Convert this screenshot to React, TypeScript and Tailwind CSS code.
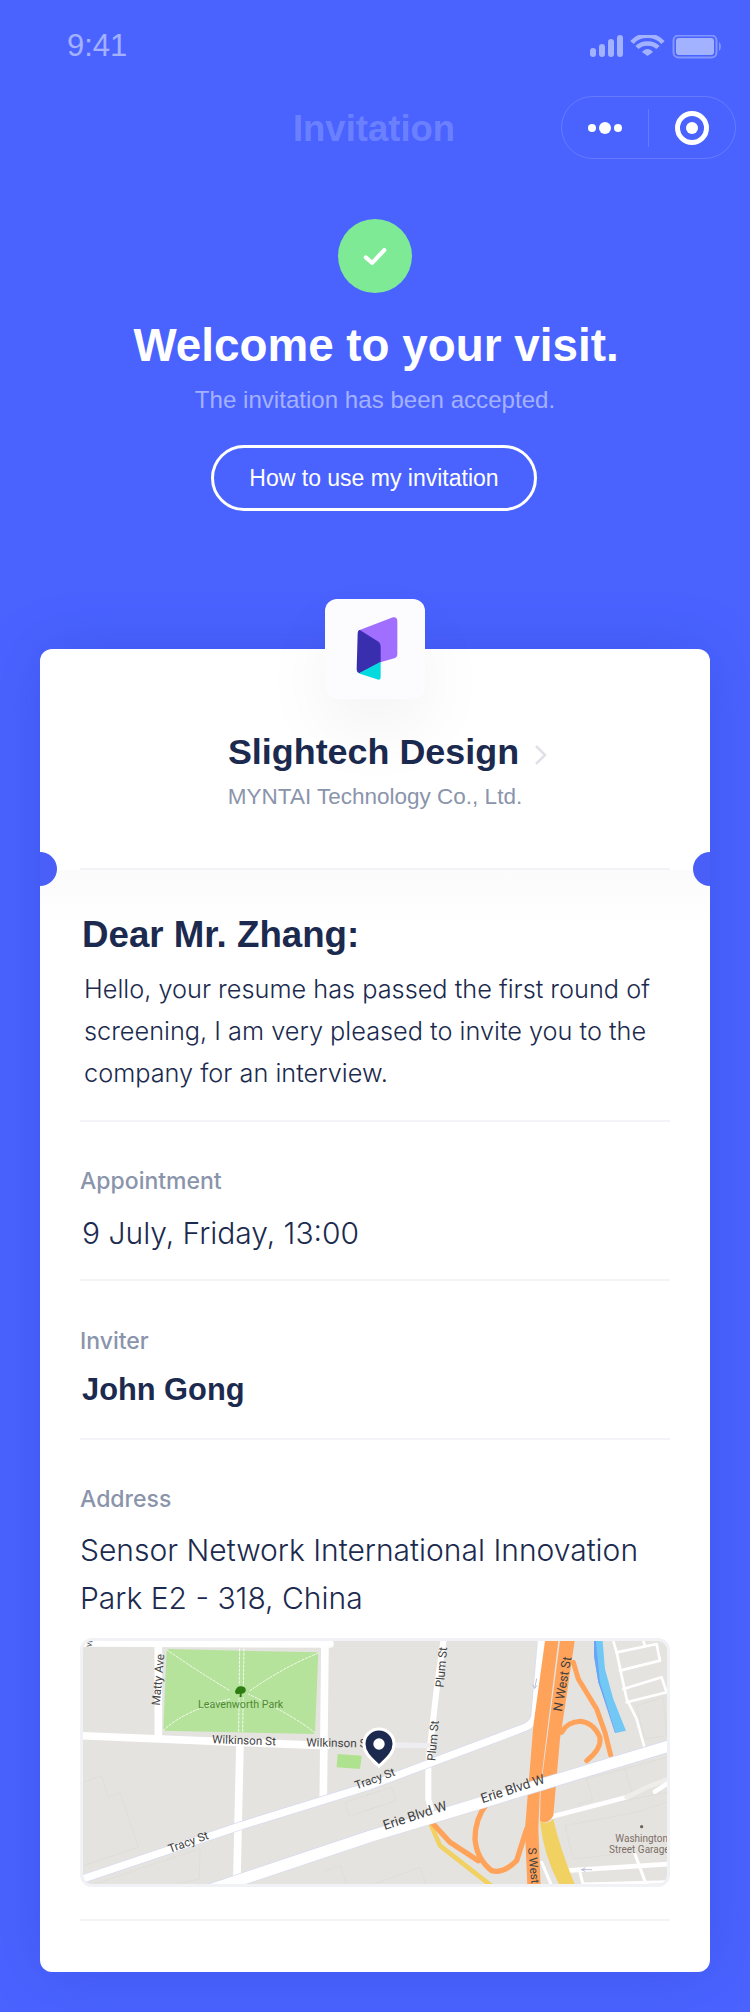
const rows = [
  { label: 'Appointment', value: '9 July, Friday, 13:00' },
]

function StatusIcons() {
  return (
    <svg className="mt-[2px]" width="132" height="24" viewBox="590 35 132 24" fill="none">
      <rect x="590" y="48" width="6" height="9" rx="3" fill="#a3b2ff" />
      <rect x="599" y="44" width="6" height="13" rx="3" fill="#a3b2ff" />
      <rect x="608" y="39" width="6" height="18" rx="3" fill="#a3b2ff" />
      <rect x="617" y="35" width="6" height="22" rx="3" fill="#a3b2ff" />
      <path d="M632 42.5C639 33.5 655 33.5 663 42.5" stroke="#a3b2ff" strokeWidth="4.500" />
      <path d="M637 47.500C642 42 653 42 658 47.500" stroke="#a3b2ff" strokeWidth="4.500" />
      <path d="M642 52C645.5 48 649.5 48 653 52L647.5 56Z" fill="#a3b2ff" />
      <rect x="673.5" y="35.5" width="43" height="22" rx="5" stroke="#8196ff" strokeWidth="2" />
      <rect x="676" y="38" width="38" height="17" rx="3" fill="#a3b2ff" />
      <path d="M719 42C721.500 43 721.500 50 719 51Z" fill="#8196ff" />
    </svg>
  )
}

function NavCapsule() {
  return (
    <div className="flex h-[63px] w-[175px] items-center rounded-full border border-white/15 justify-self-end mr-[14px] -mt-[3px]">
      <div className="flex h-[38px] w-[87px] items-center justify-center gap-[3px] border-r border-white/15">
        <span className="h-2 w-2 rounded-full bg-white" />
        <span className="h-3 w-3 rounded-full bg-white" />
        <span className="h-2 w-2 rounded-full bg-white" />
      </div>
      <div className="flex flex-1 items-center justify-center">
        <div className="flex h-[34px] w-[34px] items-center justify-center rounded-full border-[5px] border-white">
          <span className="h-3 w-3 rounded-full bg-white" />
        </div>
      </div>
    </div>
  )
}

function Logo() {
  return (
    <svg className="ml-[4px]" width="50" height="70" viewBox="160 70 140 210">
      <path d="M178 118L278 80Q291 78 291 92V190Q291 200 282 203L235 216L200 150Z" fill="#a06fff" />
      <path d="M172 128Q174 114 182 120L226 148Q241 155 241 168V215L178 248Q169 246 169 235Z" fill="#392eae" />
      <path d="M176 248L241 213V258Q241 270 230 266L188 252Q180 250 176 248Z" fill="#05d9e0" />
    </svg>
  )
}

const leftCrop = 'translate(70 1630) scale(0.3333)'
const rightCrop = 'translate(370 1630) scale(0.3333)'

function MapView() {
  const road = 'fill-none stroke-white'
  const tracy = 'M-870 753L-390 591L0 470L465 295Q490 285 495 260L515 30'
  const erie = 'M-489 786L0 622L900 350'
  return (
    <div className="mt-4 h-[249px] overflow-hidden rounded-[12px] border-[3px] border-[#f1f2f6] bg-[#e5e3df]">
      <svg width="584" height="243" viewBox="83 1642 584 243" className="block">
        {/* left half, drawn in the crop's own units */}
        <g transform={leftCrop} strokeLinejoin="round" strokeLinecap="round">
          <g className="fill-none stroke-[#dbd9d5]" strokeWidth="1.500">
            <path d="M40 460L95 440L115 505L150 492L205 655L40 710" />
            <path d="M60 770L390 658L388 750L300 770" />
            <path d="M825 520L930 485M825 520L838 562L930 530" />
            <path d="M765 725L812 710L830 770" />
          </g>
          <path d="M290 60L745 70L735 315L280 305Z" fill="#b5e39b" />
          <g className={road} strokeWidth="23">
            <path d="M30 42L780 45" />
            <path d="M265 45V320" />
            <path d="M30 320L510 340L770 350" />
            <path d="M510 340L500 780" />
            <path d="M765 40L760 500" />
          </g>
          <g className="fill-none stroke-white" strokeWidth="2.500" strokeDasharray="7 5">
            <path d="M509 60L506 310M522 60L518 310" />
            <path d="M290 62Q380 125 480 185" />
            <path d="M745 72Q640 115 540 185" />
            <path d="M280 305Q340 245 480 210" />
            <path d="M735 312Q680 265 535 195" />
          </g>
          <circle cx="511" cy="188" r="20" fill="#b5e39b" />
          <path d="M509 204V194L500 196Q492 190 497 182Q503 170 514 172Q530 174 527 187Q523 195 515 194V204Z" fill="#2f7d12" />
          <path d="M803 375L875 380L870 420L800 415Z" fill="#aee28f" />
        </g>
        {/* right half */}
        <g transform={rightCrop} strokeLinejoin="round" strokeLinecap="round">
          <g className="fill-none stroke-[#dbd9d5]" strokeWidth="1.500">
            <path d="M650 450L890 385M650 450L668 515L625 525L640 540L890 490" />
            <path d="M765 420L790 500" />
            <path d="M585 590L800 550L890 520M585 590L610 690L790 670" />
            <path d="M800 230L880 205L890 320L825 330Z" />
            <path d="M-10 500L65 475L78 515L-10 545" />
            <path d="M0 770L150 715L170 770" />
          </g>
          <path d="M672 36H698L705 120L730 210L768 305L738 312L715 240L685 160L672 80Z" fill="#72c8f5" />
          <path d="M672 36H678L690 160L738 312H735L685 160L672 80Z" fill="#6aa5f5" />
          <g className={road} strokeWidth="8">
            <path d="M730 36L740 70L770 210L800 270L822 350" />
            <path d="M740 70L860 45L870 95L750 125" />
            <path d="M760 180L875 145L890 190L770 220" />
            <path d="M820 36L825 50" />
          </g>
          <path d="M550 562L770 505" className={road} strokeWidth="14" />
          <path d="M770 505L830 475L895 450" className="fill-none stroke-[#eeedea]" strokeWidth="14" />
          <path d="M855 488L895 462" className={road} strokeWidth="14" />
          <path d="M590 725L895 705" className={road} strokeWidth="14" />
          <path d="M795 675L830 770M630 730L640 770M640 765L895 758M515 700L545 770" className={road} strokeWidth="9" />
          <path d="M220 36L200 180L175 400V510L190 570" className={road} strokeWidth="18" />
          <path d="M70 348L175 350" className="fill-none stroke-[#eeeef2]" strokeWidth="16" />
          <path d={tracy} className="fill-none stroke-[#d6daf0]" strokeWidth="26" />
          <path d={tracy} className={road} strokeWidth="22" />
          <path d="M500 150L494 178M488 168L494 178L500 170" className="fill-none stroke-[#b9bfd6]" strokeWidth="3" />
          <path d="M180 580L210 650L370 775" className="fill-none stroke-[#f0d162]" strokeWidth="14" />
          <path d="M185 580L240 640L325 695" className="fill-none stroke-[#ffa25a]" strokeWidth="16" />
          <path d="M350 525Q315 570 315 630Q320 690 365 725Q400 735 440 695L470 600" className="fill-none stroke-[#ffa25a]" strokeWidth="16" />
          <path d="M610 100L625 150L680 240L705 310L722 378" className="fill-none stroke-[#ffa25a]" strokeWidth="15" />
          <path d="M575 310Q590 280 630 277Q670 280 690 325Q695 360 650 395" className="fill-none stroke-[#ffa25a]" strokeWidth="15" />
          <path d="M525 36H565L510 480L505 600L512 770H472L465 600L490 290Z" fill="#ffa25a" />
          <path d="M570 36H614L590 200L570 330L550 560Q530 590 510 575L512 480Z" fill="#ffa25a" />
          <path d="M510 575Q530 590 550 570Q570 660 618 775H572Q520 680 510 575Z" fill="#f0d162" />
          <path d={erie} className="fill-none stroke-[#d6daf0]" strokeWidth="38" />
          <path d={erie} className={road} strokeWidth="34" />
          <path d="M635 722H665M635 722L645 717M635 722L645 727" className="fill-none stroke-[#b9bfd6]" strokeWidth="3" />
          <circle cx="815" cy="593" r="5" fill="#6f625a" />
        </g>
        {/* labels stay above every road */}
        <g transform={leftCrop} className="font-['Roboto',sans-serif]" fontSize="35" fill="#3f3f3f" textAnchor="middle">
          <text x="512" y="237" fontSize="32" fill="#4f8a33">Leavenworth Park</text>
          <text x="522" y="346" transform="rotate(2 522 335)">Wilkinson St</text>
          <text x="805" y="354" transform="rotate(1 805 343)">Wilkinson St</text>
          <text x="355" y="651" transform="rotate(-20 355 640)">Tracy St</text>
          <text x="265" y="163" transform="rotate(-85 265 152)">Matty Ave</text>
          <text x="60" y="47" fontSize="28" transform="rotate(-80 60 40)">ve</text>
        </g>
        <g transform={rightCrop} className="font-['Roboto',sans-serif]" fontSize="35" fill="#3f3f3f" textAnchor="middle">
          <text x="215" y="126" transform="rotate(-85 215 115)">Plum St</text>
          <text x="190" y="346" transform="rotate(-85 190 335)">Plum St</text>
          <text x="578" y="177" fontSize="38" transform="rotate(-80 578 165)">N West St</text>
          <text x="490" y="721" transform="rotate(85 490 710)">S West</text>
          <text x="135" y="573" fontSize="40" transform="rotate(-18 135 560)">Erie Blvd W</text>
          <text x="428" y="493" fontSize="40" transform="rotate(-18 428 480)">Erie Blvd W</text>
          <text x="15" y="461" transform="rotate(-20 15 450)">Tracy St</text>
          <text x="815" y="638" fontSize="30" fill="#7c6f67">Washington</text>
          <text x="808" y="673" fontSize="30" fill="#7c6f67">Street Garage</text>
        </g>
        <g transform={rightCrop}>
          <path d="M27 412C10 394-18 375-18 345A45 45 0 0 1 72 345C72 375 44 394 27 412Z" fill="#1b2a4e" stroke="#fff" strokeWidth="9" />
          <circle cx="27" cy="345" r="17" fill="#fff" />
        </g>
      </svg>
    </div>
  )
}

export default function App() {
  return (
    <div className="flex h-[2012px] w-[750px] flex-col items-center overflow-hidden bg-[#4a63ff] font-['Liberation_Sans',Arial,sans-serif]">
      {/* status bar */}
      <div className="flex h-[92px] w-full items-center justify-between pl-[67px] pr-[28px]">
        <span className="text-[31px] text-white/50">9:41</span>
        <StatusIcons />
      </div>

      {/* nav */}
      <div className="grid h-[74px] w-full grid-cols-[1fr_auto_1fr] items-center">
        <span />
        <span className="-ml-[2px] text-[36.500px] font-bold text-white/20">Invitation</span>
        <NavCapsule />
      </div>

      {/* header */}
      <div className="mt-[53px] flex h-[74px] w-[74px] items-center justify-center rounded-full bg-[#7eea95]">
        <svg width="24" height="19" viewBox="0 0 26 20" fill="none">
          <path d="M3 11L10 17L23 3" stroke="#fff" strokeWidth="4.500" strokeLinecap="round" strokeLinejoin="round" />
        </svg>
      </div>
      <h1 className="mt-[25px] ml-[2px] text-[45.800px] font-bold leading-[56px] text-white">Welcome to your visit.</h1>
      <p className="mt-2 text-[24.100px] leading-9 text-white/50">The invitation has been accepted.</p>
      <button className="mt-[27px] -ml-[2px] flex h-[66px] w-[326px] items-center justify-center rounded-full border-[3px] border-white text-[23px] text-white">
        How to use my invitation
      </button>

      {/* logo sits half over the card */}
      <div className="z-10 mt-[88px] -mb-[50px] flex h-[100px] w-[100px] items-center justify-center rounded-[12px] bg-[#fcfcff] shadow-[0_30px_70px_rgba(0,0,0,0.05)]">
        <Logo />
      </div>

      {/* ticket card */}
      <div className="relative h-[1323px] w-[670px] rounded-[12px] bg-white shadow-[0_0_60px_rgba(30,40,160,0.2)]">
        <span className="absolute left-0 top-[203px] h-[34px] w-[17px] rounded-r-full bg-[#4a5ff8]" />
        <span className="absolute right-0 top-[203px] h-[34px] w-[17px] rounded-l-full bg-[#4a5ff8]" />

        <div className="flex h-[48px] translate-y-[80px] items-center justify-center pl-[26px]">
          <span className="text-[35.900px] font-bold text-[#1b2a4e]">Slightech Design</span>
          <svg className="ml-[15px] mt-1" width="14" height="22" viewBox="0 0 14 22" fill="none">
            <path d="M2 2L11 11L2 20" stroke="#dfe0e8" strokeWidth="2.500" />
          </svg>
        </div>
        <p className="mt-[84px] text-center text-[22.500px] leading-8 text-[#8a94ab]">MYNTAI Technology Co., Ltd.</p>

        <div className="mx-10 mt-[55px] h-[2px] bg-[#f2f3f6]" />

        <div className="bg-linear-to-b from-[#fbfbfb] to-white to-[60px] px-10 text-[#1b2a4e]">
          <div className="border-b-2 border-[#f3f4f7] pb-[26px] pt-[44px]">
            <h2 className="ml-[2px] -mt-[1px] mb-[1px] text-[36.700px] font-bold leading-[44px]">Dear Mr. Zhang:</h2>
            <p className="ml-[4px] mt-[11px] whitespace-nowrap font-['Inter',sans-serif] text-[25.300px] font-light leading-[42px]">
              Hello, your resume has passed the first round of
              <br />
              screening, I am very pleased to invite you to the
              <br />
              company for an interview.
            </p>
          </div>

          {rows.map((row) => (
            <div key={row.label} className="border-b-2 border-[#f3f4f7] pb-[26px] pt-[43px]">
              <p className="font-['Inter',sans-serif] text-[23px] font-medium leading-8 text-[#8a94ab]">{row.label}</p>
              <p className="ml-[2px] mt-4 font-['Inter',sans-serif] text-[30px] font-light leading-10">{row.value}</p>
            </div>
          ))}

          <div className="border-b-2 border-[#f3f4f7] pb-[28px] pt-[44px]">
            <p className="font-['Inter',sans-serif] text-[23px] font-medium leading-8 text-[#8a94ab]">Inviter</p>
            <p className="ml-[2px] mt-[13px] text-[30.800px] font-bold leading-10">John Gong</p>
          </div>

          <div className="border-b-2 border-[#f3f4f7] pb-[32px] pt-[43px]">
            <p className="font-['Inter',sans-serif] text-[23px] font-medium leading-8 text-[#8a94ab]">Address</p>
            <p className="mt-[11px] whitespace-nowrap font-['Inter',sans-serif] text-[30px] font-light leading-[48px]">
              Sensor Network International Innovation
              <br />
              Park E2 - 318, China
            </p>
            <MapView />
          </div>
        </div>
      </div>
    </div>
  )
}
